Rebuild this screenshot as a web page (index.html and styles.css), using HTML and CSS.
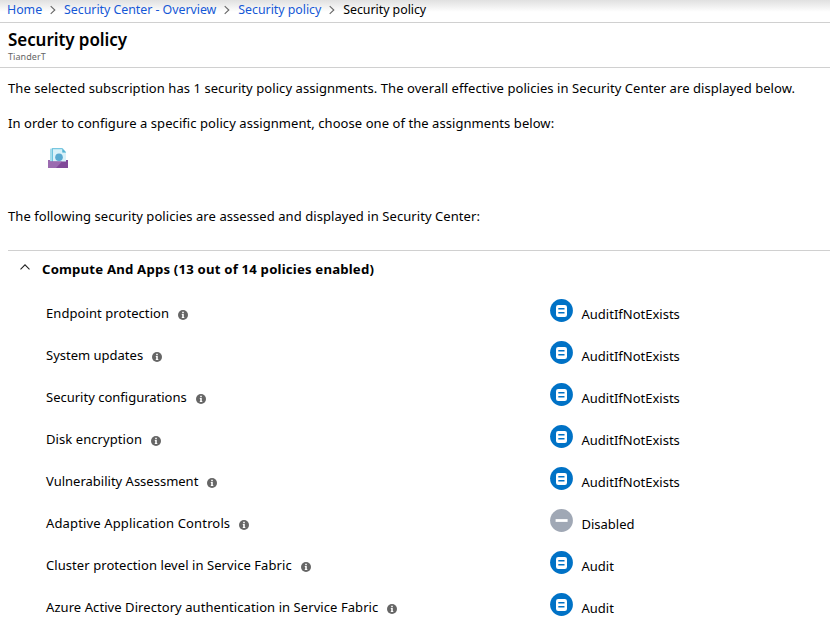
FILE: index.html
```html
<!DOCTYPE html>
<html lang="en">
<head>
<meta charset="utf-8">
<title>Security policy</title>
<link rel="stylesheet" href="styles.css">
</head>
<body>
<svg class="defs" aria-hidden="true">
  <symbol id="info" viewBox="0 0 10 10"><circle cx="5" cy="5" r="5" fill="#666"/><path d="M4.2 1.8h1.6v1.4H4.2zM3.8 4.1h2V7h.5v.9H3.8V7h.4V5h-.4z" fill="#fff"/></symbol>
  <symbol id="audit" viewBox="0 0 23 23"><circle cx="11.5" cy="11.5" r="11.4" fill="#0072c6"/><rect x="6" y="6" width="11" height="12" rx="2.2" fill="#fff"/><path d="M8.3 9.8h6.2M8.3 13.8h6.2" stroke="#0072c6" stroke-width="1.5"/></symbol>
  <symbol id="disabled" viewBox="0 0 23 23"><circle cx="11.5" cy="11.5" r="11.4" fill="#a0a8b5"/><path d="M5.6 11.5h12" stroke="#fff" stroke-width="2.8"/></symbol>
  <symbol id="next" viewBox="0 0 6 10"><path d="M.7 1.2 4.8 5 .7 8.8" fill="none" stroke="#666" stroke-width="1.1"/></symbol>
</svg>
<nav class="crumbs">
  <a>Home</a><svg class="next"><use href="#next"/></svg>
  <a>Security Center - Overview</a><svg class="next"><use href="#next"/></svg>
  <a>Security policy</a><svg class="next"><use href="#next"/></svg>
  <span>Security policy</span>
</nav>
<header class="head">
  <h1>Security policy</h1>
  <p class="sub">TianderT</p>
</header>
<main>
  <p class="intro">The selected subscription has 1 security policy assignments. The overall effective policies in Security Center are displayed below.</p>
  <p class="choose">In order to configure a specific policy assignment, choose one of the assignments below:</p>
  <svg class="assignment" viewBox="0 0 20 20"><path d="M2 1.5Q2 .5 3 .5h12L18 4v10H2z" fill="#a5dcec"/><path d="M5 1.2h9.5v3.3H18V14H5z" fill="#d9f1f9"/><path d="M4.5 1v13M4 .6h10.5" stroke="#6fc3de"/><path d="M14.3.5 18.2 4.4h-3.9z" fill="#55b4d4"/><circle cx="11" cy="9.3" r="3.8" fill="#59a9d0"/><path d="M0 12h2v1.5h16V12h2v8H0z" fill="#804998"/><path d="M0 12h2v1.5h12L8 20H0z" fill="#9b6bb0"/></svg>
  <p class="follow">The following security policies are assessed and displayed in Security Center:</p>
  <section>
    <h2><svg class="up" viewBox="0 0 10 6"><path d="M.5 5.3 5 .8l4.5 4.5" fill="none" stroke="#222" stroke-width="1.1"/></svg>Compute And Apps (13 out of 14 policies enabled)</h2>
    <ul>
      <li><div class="name">Endpoint protection<svg class="info"><use href="#info"/></svg></div><svg class="state"><use href="#audit"/></svg><span class="value">AuditIfNotExists</span></li>
      <li><div class="name tight">System updates<svg class="info"><use href="#info"/></svg></div><svg class="state"><use href="#audit"/></svg><span class="value">AuditIfNotExists</span></li>
      <li><div class="name tight">Security configurations<svg class="info"><use href="#info"/></svg></div><svg class="state"><use href="#audit"/></svg><span class="value">AuditIfNotExists</span></li>
      <li><div class="name">Disk encryption<svg class="info"><use href="#info"/></svg></div><svg class="state"><use href="#audit"/></svg><span class="value">AuditIfNotExists</span></li>
      <li><div class="name tight">Vulnerability Assessment<svg class="info"><use href="#info"/></svg></div><svg class="state"><use href="#audit"/></svg><span class="value">AuditIfNotExists</span></li>
      <li><div class="name wide">Adaptive Application Controls<svg class="info"><use href="#info"/></svg></div><svg class="state"><use href="#disabled"/></svg><span class="value">Disabled</span></li>
      <li><div class="name">Cluster protection level in Service Fabric<svg class="info"><use href="#info"/></svg></div><svg class="state"><use href="#audit"/></svg><span class="value">Audit</span></li>
      <li><div class="name">Azure Active Directory authentication in Service Fabric<svg class="info"><use href="#info"/></svg></div><svg class="state"><use href="#audit"/></svg><span class="value">Audit</span></li>
    </ul>
  </section>
</main>
</body>
</html>
```
FILE: styles.css
```css
* { box-sizing: border-box; }
body { margin: 0; width: 830px; height: 620px; overflow: hidden; background: #fff; color: #000; font: 13px/18px "Noto Sans", "Open Sans", sans-serif; letter-spacing: .064px; white-space: nowrap; }
.defs { position: absolute; width: 0; height: 0; }
h1, h2, p, ul { margin: 0; padding: 0; list-style: none; }
svg { display: block; flex: none; }
.crumbs { display: flex; align-items: center; height: 23px; padding: 0 0 3px 7px; border-bottom: 1px solid #d0d0d0; background: linear-gradient(#e0e0e0, #fff 12px); font-size: 12.4px; letter-spacing: -.04px; }
.crumbs a { color: #1558d6; }
.next { width: 6px; height: 10px; margin: 0 8px; }
.head { height: 45px; padding: 5px 8px 0; border-bottom: 1px solid #d0d0d0; }
h1 { font-size: 17px; line-height: 24px; font-weight: 600; letter-spacing: -.07px; }
.sub { font-size: 9px; line-height: 10px; color: #666; }
main { padding: 11px 0 0 8px; }
.choose { margin-top: 17px; }
.assignment { width: 20px; height: 20px; margin: 16px 0 0 40px; }
.follow { margin-top: 39px; }
section { margin-top: 25px; border-top: 1px solid #d0d0d0; }
h2 { display: flex; align-items: center; height: 36px; padding-left: 12px; font-size: 13.2px; font-weight: 700; letter-spacing: .18px; }
.up { width: 10px; height: 6px; margin: 0 12px 4px 0; }
ul { padding-top: 5px; }
li { display: flex; height: 42px; padding-left: 38px; }
.name { display: flex; align-items: center; width: 504px; letter-spacing: .07px; }
.tight { letter-spacing: 0; }
.wide { letter-spacing: .14px; }
.info { width: 10px; height: 10px; margin: 3px 0 0 9px; }
.state { width: 23px; height: 23px; margin: 7px 8.5px 0 0; }
.value { padding-top: 13px; letter-spacing: 0; }
```
